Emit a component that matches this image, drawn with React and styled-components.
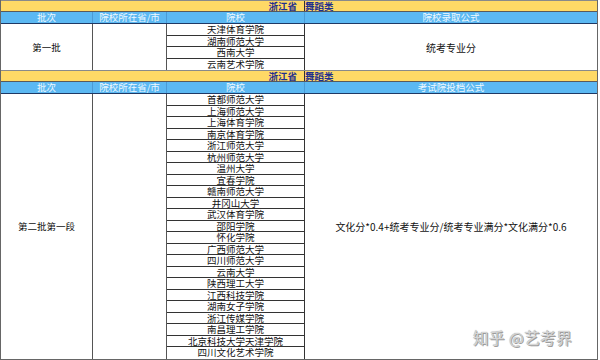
import styled, { createGlobalStyle } from "styled-components";

const GlobalStyle = createGlobalStyle`
  html, body {
    margin: 0;
    padding: 0;
    background: #fff;
  }
  body {
    font-family: "Noto Sans CJK SC", "Noto Sans", sans-serif;
  }
`;

const Sheet = styled.div`
  position: relative;
  width: 598px;
  box-sizing: border-box;
  border-left: 1px solid #666;
  border-right: 1px solid #666;
  border-bottom: 1px solid #666;
`;

const Section = styled.section`
  border-top: 1px solid #8a8a8a;
`;

const TitleRow = styled.div`
  display: grid;
  grid-template-columns: 304px 1fr;
  height: 11px;
  box-sizing: border-box;
  background-color: #ffd966;
  border-bottom: 1px solid #5a5a5a;
  font-size: 9.5px;
  line-height: 10px;
  font-weight: bold;
  color: #1f2f8f;
`;

const TitleCell = styled.div`
  box-sizing: border-box;
  text-align: ${(p) => p.$align};
  padding-right: ${(p) => (p.$align === "right" ? "7px" : "0")};
  border-right: ${(p) => (p.$align === "right" ? "1px solid #333" : "none")};
  white-space: nowrap;
`;

const Grid = styled.div`
  display: grid;
  grid-template-columns: 92px 74px 138px 1fr;
`;

const HeaderRow = styled(Grid)`
  height: 12px;
  box-sizing: border-box;
  background-color: #5bb8f2;
  border-bottom: 1px solid #1f3864;
  color: #eef8ff;
  font-size: 9.5px;
  line-height: 11px;
`;

const HeaderCell = styled.div`
  box-sizing: border-box;
  text-align: center;
  white-space: nowrap;
  border-right: ${(p) => (p.$last ? "none" : "1px solid #4a9ad6")};
`;

const Body = styled(Grid)`
  font-size: 9.5px;
  color: #111;
`;

const Cell = styled.div`
  box-sizing: border-box;
  display: flex;
  align-items: center;
  justify-content: center;
  white-space: nowrap;
  border-right: ${(p) => (p.$last ? "none" : "1px solid #555")};
`;

const SchoolList = styled.div`
  display: flex;
  flex-direction: column;
  border-right: 1px solid #333;
`;

const School = styled.div`
  height: 11.5px;
  box-sizing: border-box;
  line-height: 10.5px;
  text-align: center;
  white-space: nowrap;
  border-bottom: 1px solid #333;

  &:last-child {
    border-bottom: none;
  }
`;

const Formula = styled(Cell)`
  font-size: 10px;
`;

const Watermark = styled.div`
  position: absolute;
  left: 472px;
  top: 326px;
  font-size: 15.5px;
  letter-spacing: 0.5px;
  color: #d6d6d6;
  text-shadow: 0 0 1px #8a8a8a, 1px 1px 0 #a0a0a0;
  white-space: nowrap;
`;

const sections = [
  {
    headers: ["批次", "院校所在省/市", "院校", "院校录取公式"],
    batch: "第一批",
    formula: "统考专业分",
    schools: ["天津体育学院", "湖南师范大学", "西南大学", "云南艺术学院"],
  },
  {
    headers: ["批次", "院校所在省/市", "院校", "考试院投档公式"],
    batch: "第二批第一段",
    formula: "文化分*0.4+统考专业分/统考专业满分*文化满分*0.6",
    schools: [
      "首都师范大学",
      "上海师范大学",
      "上海体育学院",
      "南京体育学院",
      "浙江师范大学",
      "杭州师范大学",
      "温州大学",
      "宜春学院",
      "赣南师范大学",
      "井冈山大学",
      "武汉体育学院",
      "邵阳学院",
      "怀化学院",
      "广西师范大学",
      "四川师范大学",
      "云南大学",
      "陕西理工大学",
      "江西科技学院",
      "湖南女子学院",
      "浙江传媒学院",
      "南昌理工学院",
      "北京科技大学天津学院",
      "四川文化艺术学院",
    ],
  },
];

function App() {
  return (
    <>
      <GlobalStyle />
      <Sheet>
        {sections.map((section) => (
          <Section key={section.batch}>
            <TitleRow>
              <TitleCell $align="right">浙江省</TitleCell>
              <TitleCell $align="left">舞蹈类</TitleCell>
            </TitleRow>
            <HeaderRow>
              {section.headers.map((h, i) => (
                <HeaderCell key={h} $last={i === section.headers.length - 1}>
                  {h}
                </HeaderCell>
              ))}
            </HeaderRow>
            <Body>
              <Cell>{section.batch}</Cell>
              <Cell />
              <SchoolList>
                {section.schools.map((s) => (
                  <School key={s}>{s}</School>
                ))}
              </SchoolList>
              <Formula $last>{section.formula}</Formula>
            </Body>
          </Section>
        ))}
        <Watermark>知乎 @艺考界</Watermark>
      </Sheet>
    </>
  );
}

export default App;
